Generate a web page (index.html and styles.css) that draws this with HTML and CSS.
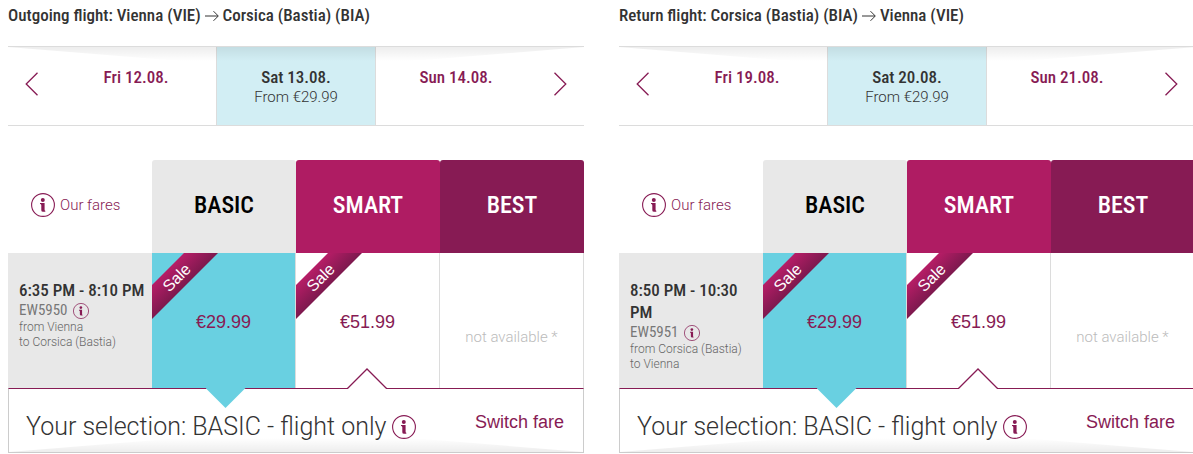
FILE: index.html
```html
<!DOCTYPE html>
<html lang="en">
<head>
    <meta charset="UTF-8">
    <meta name="viewport" content="width=device-width, initial-scale=1.0">
    <title>Select flight</title>
    <link rel="stylesheet" href="styles.css">
</head>
<body>
    <svg width="0" height="0" class="sprite" aria-hidden="true">
        <symbol id="info" viewBox="0 0 24 24">
            <circle cx="12" cy="12" r="11.4" fill="none" stroke="currentColor" stroke-width="1.1"/>
            <circle cx="11.8" cy="6.900" r="2" fill="currentColor"/>
            <path d="M9 10h4.600v6.800q0 .9.700.9v1.100h-2.200q-1.800 0-1.800-1.600v-5q0-1.100-1.300-1.100z" fill="currentColor"/>
        </symbol>
        <symbol id="prev" viewBox="0 0 14 24">
            <path d="M12.500 .7L1.200 12l11.300 11.300" fill="none" stroke="currentColor" stroke-width="1.300"/>
        </symbol>
        <symbol id="next" viewBox="0 0 14 24">
            <path d="M1.500 .7L12.800 12 1.500 23.300" fill="none" stroke="currentColor" stroke-width="1.300"/>
        </symbol>
        <symbol id="arrow" viewBox="0 0 14 12">
            <path d="M0 6h13M8.500 1.200L13.300 6l-4.800 4.800" fill="none" stroke="currentColor" stroke-width="1"/>
        </symbol>
    </svg>
    <main class="flights">
        <section class="flight">
            <h2>Outgoing flight: Vienna (VIE) <svg class="arrow" role="img" aria-label="to"><use href="#arrow"/></svg> Corsica (Bastia) (BIA)</h2>
            <nav class="dates">
                <button class="step" aria-label="Previous day"><svg><use href="#prev"/></svg></button>
                <a class="day" href="#">Fri 12.08.</a>
                <a class="day active" href="#">Sat 13.08.<span>From €29.99</span></a>
                <a class="day" href="#">Sun 14.08.</a>
                <button class="step" aria-label="Next day"><svg><use href="#next"/></svg></button>
            </nav>
            <table class="fares">
                <thead>
                    <tr>
                        <td><a class="our-fares" href="#"><svg class="info"><use href="#info"/></svg>Our fares</a></td>
                        <th class="basic">BASIC</th>
                        <th class="smart">SMART</th>
                        <th class="best">BEST</th>
                    </tr>
                </thead>
                <tbody>
                    <tr>
                        <th class="details">
                            <div class="time">6:35 PM - 8:10 PM</div>
                            <div class="number">EW5950 <button aria-label="Flight details"><svg class="info small"><use href="#info"/></svg></button></div>
                            <div class="route">from Vienna<br>to Corsica (Bastia)</div>
                        </th>
                        <td class="fare selected"><div class="ribbon"><span>Sale</span></div><button class="price">€29.99</button></td>
                        <td class="fare"><div class="ribbon"><span>Sale</span></div><button class="price">€51.99</button><svg class="notch" viewBox="0 0 40 21"><path d="M0 21L20 1l20 20z" fill="#fff"/><path d="M0 20.500h.5L20 1l19.500 19.500h.5" fill="none" stroke="#871b54" stroke-width="1.300"/></svg></td>
                        <td class="fare"><span class="unavailable">not available *</span></td>
                    </tr>
                </tbody>
            </table>
            <div class="selection">
                <p>Your selection: BASIC - flight only <button aria-label="Fare details"><svg class="info"><use href="#info"/></svg></button></p>
                <a href="#">Switch fare</a>
            </div>
        </section>
        <section class="flight">
            <h2>Return flight: Corsica (Bastia) (BIA) <svg class="arrow" role="img" aria-label="to"><use href="#arrow"/></svg> Vienna (VIE)</h2>
            <nav class="dates">
                <button class="step" aria-label="Previous day"><svg><use href="#prev"/></svg></button>
                <a class="day" href="#">Fri 19.08.</a>
                <a class="day active" href="#">Sat 20.08.<span>From €29.99</span></a>
                <a class="day" href="#">Sun 21.08.</a>
                <button class="step" aria-label="Next day"><svg><use href="#next"/></svg></button>
            </nav>
            <table class="fares">
                <thead>
                    <tr>
                        <td><a class="our-fares" href="#"><svg class="info"><use href="#info"/></svg>Our fares</a></td>
                        <th class="basic">BASIC</th>
                        <th class="smart">SMART</th>
                        <th class="best">BEST</th>
                    </tr>
                </thead>
                <tbody>
                    <tr>
                        <th class="details">
                            <div class="time">8:50 PM - 10:30 PM</div>
                            <div class="number">EW5951 <button aria-label="Flight details"><svg class="info small"><use href="#info"/></svg></button></div>
                            <div class="route">from Corsica (Bastia)<br>to Vienna</div>
                        </th>
                        <td class="fare selected"><div class="ribbon"><span>Sale</span></div><button class="price">€29.99</button></td>
                        <td class="fare"><div class="ribbon"><span>Sale</span></div><button class="price">€51.99</button><svg class="notch" viewBox="0 0 40 21"><path d="M0 21L20 1l20 20z" fill="#fff"/><path d="M0 20.500h.5L20 1l19.500 19.500h.5" fill="none" stroke="#871b54" stroke-width="1.300"/></svg></td>
                        <td class="fare"><span class="unavailable">not available *</span></td>
                    </tr>
                </tbody>
            </table>
            <div class="selection">
                <p>Your selection: BASIC - flight only <button aria-label="Fare details"><svg class="info"><use href="#info"/></svg></button></p>
                <a href="#">Switch fare</a>
            </div>
        </section>
    </main>
</body>
</html>
```

FILE: styles.css
```css
* {
    box-sizing: border-box;
}
body {
    margin: 0;
    overflow: hidden;
    background: #fff;
    color: #333;
    font-family: "Liberation Sans", Arial, sans-serif;
}
a {
    color: #871b54;
    text-decoration: none;
}
button {
    padding: 0;
    border: 0;
    background: none;
    color: #871b54;
    font: inherit;
    cursor: pointer;
}
.sprite {
    position: absolute;
}
.flights {
    display: grid;
    grid-template-columns: 1fr 1fr;
    gap: 35px;
    margin: 0 -2px 0 8px;
}
h2,
.day,
.time {
    font: 500 17px/22px "Roboto Condensed", "Liberation Sans", sans-serif;
}
h2 {
    margin: 0 0 20px;
    padding-top: 4px;
    white-space: nowrap;
}
.arrow {
    width: 14px;
    height: 12px;
    vertical-align: -1px;
}

/* date strip */
.dates {
    position: relative;
    display: grid;
    grid-template-columns: 48px 1fr 1fr 1fr 48px;
    height: 80px;
    margin-bottom: 34px;
    border-top: 1px solid #dcdcdc;
    border-bottom: 1px solid #dcdcdc;
}
.dates::before,
.selection::after {
    content: "";
    position: absolute;
    top: 0;
    left: 0;
    right: 0;
    height: 14px;
    background: linear-gradient(rgba(0, 0, 0, .07), rgba(0, 0, 0, 0));
    clip-path: polygon(0 0, 100% 0, 70% 100%, 30% 100%);
    pointer-events: none;
}
.step svg {
    display: block;
    width: 14px;
    height: 24px;
    margin: 0 auto 4px;
}
.day {
    padding-top: 19px;
    text-align: center;
}
.day.active {
    border: solid #dcdcdc;
    border-width: 0 1px;
    background: #d2eef4;
    color: #333;
}
.day span {
    display: block;
    font: 300 15px/18px Roboto, "Liberation Sans", sans-serif;
}

/* fares */
.fares {
    width: 100%;
    table-layout: fixed;
    border-collapse: separate;
    border-spacing: 0;
}
.fares td,
.fares th {
    padding: 0;
}
.fares thead tr {
    height: 93px;
}
.fares thead th {
    padding-bottom: 4px;
    border-radius: 3px 3px 0 0;
    color: #fff;
    font: 500 24px/30px "Roboto Condensed", "Liberation Sans", sans-serif;
}
.fares thead .basic {
    background: #e8e8e8;
    color: #000;
}
.smart {
    background: #af1c63;
}
.best {
    background: #871b54;
}
.our-fares {
    display: flex;
    align-items: center;
    gap: 5px;
    padding: 0 0 3px 23px;
    font: 300 15px/18px Roboto, "Liberation Sans", sans-serif;
}
.info {
    width: 24px;
    height: 24px;
}
.info.small {
    width: 16px;
    height: 16px;
}
.fares tbody tr {
    height: 135px;
}
.fares .details {
    padding: 26px 4px 0 11px;
    background: #e8e8e8;
    font-weight: normal;
    text-align: left;
    vertical-align: top;
}
.number {
    display: flex;
    align-items: center;
    gap: 5px;
    color: #777;
    font: 15px/19px "Roboto Condensed", "Liberation Sans", sans-serif;
}
.number button,
.number svg {
    display: block;
}
.route {
    color: #666;
    font: 300 12px/15px Roboto, "Liberation Sans", sans-serif;
}
.fare {
    position: relative;
    border-right: 1px solid #dcdcdc;
    text-align: center;
}
.selected {
    background: #69d0e1;
}
.selected::after {
    content: "";
    position: absolute;
    z-index: 1;
    top: 100%;
    left: calc(50% - 18px);
    width: 40px;
    height: 20px;
    background: #69d0e1;
    clip-path: polygon(0 0, 100% 0, 50% 100%);
}
.notch {
    position: absolute;
    bottom: -1px;
    left: calc(50% - 21px);
    width: 40px;
    height: 21px;
    z-index: 1;
}

/* corner ribbon */
.ribbon {
    position: absolute;
    top: 0;
    left: 0;
    width: 66px;
    height: 66px;
    background: linear-gradient(135deg, #b51d66 25%, #7d194e 50%);
    clip-path: polygon(32px 0, 66px 0, 0 66px, 0 32px);
    color: #fff;
    font-size: 16px;
    line-height: 50px;
}
.ribbon span {
    display: block;
    width: 50px;
    height: 50px;
    transform: rotate(-45deg);
}
.price {
    padding-top: 3px;
    font-size: 18px;
}
.unavailable {
    display: block;
    padding-top: 32px;
    color: #bbb;
    font: 300 15px/18px Roboto, "Liberation Sans", sans-serif;
}
.selection {
    position: relative;
    display: flex;
    justify-content: space-between;
    height: 65px;
    margin-bottom: 1px;
    padding: 20px 19px 0 17px;
    border: 1px solid #ccc;
    border-top-color: #871b54;
}
.selection::after {
    top: auto;
    bottom: 0;
    transform: scaleY(-1);
}
.selection p {
    display: flex;
    align-items: center;
    gap: 5px;
    height: 36px;
    margin: 0;
    font: 300 25px/36px Roboto, "Open Sans", sans-serif;
    white-space: nowrap;
}
.selection button,
.selection button svg {
    display: block;
}
.selection a {
    font-size: 18px;
    line-height: 26px;
}
```
